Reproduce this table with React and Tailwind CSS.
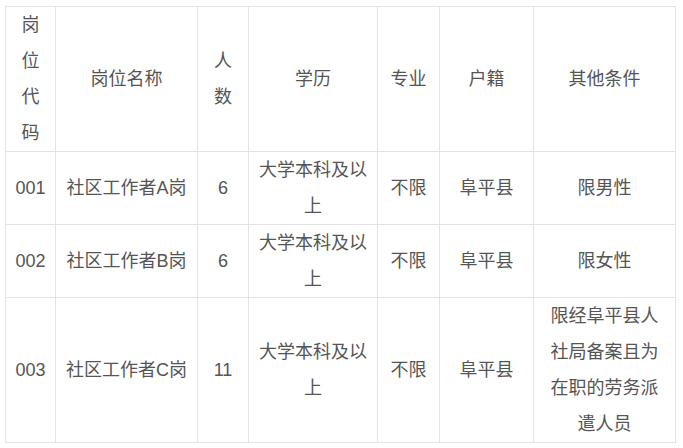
const rows = [
  { code: "001", name: "社区工作者A岗", num: "6", edu: "大学本科及以上", major: "不限", hukou: "阜平县", other: "限男性" },
  { code: "002", name: "社区工作者B岗", num: "6", edu: "大学本科及以上", major: "不限", hukou: "阜平县", other: "限女性" },
  { code: "003", name: "社区工作者C岗", num: "11", edu: "大学本科及以上", major: "不限", hukou: "阜平县", other: "限经阜平县人社局备案且为在职的劳务派遣人员" },
];

const cell = "border border-[#e3e3e3] px-[9px] py-0 text-center align-middle break-all";

const App = () => {
  return (
    <div className="w-[683px] h-[448px] bg-white pt-[6px] pl-[5px]">
      <table
        className="table-fixed border-collapse text-[18px] leading-[36px] text-[#555]"
        style={{ fontFamily: '"Liberation Sans", "Noto Sans CJK SC", sans-serif' }}
      >
        <colgroup>
          <col className="w-[50px]" />
          <col className="w-[142px]" />
          <col className="w-[51px]" />
          <col className="w-[129px]" />
          <col className="w-[62px]" />
          <col className="w-[94px]" />
          <col className="w-[142px]" />
        </colgroup>
        <thead>
          <tr className="h-[145px]">
            <th className={`${cell} font-normal`}>岗位代码</th>
            <th className={`${cell} font-normal`}>岗位名称</th>
            <th className={`${cell} font-normal`}>人数</th>
            <th className={`${cell} font-normal`}>学历</th>
            <th className={`${cell} font-normal`}>专业</th>
            <th className={`${cell} font-normal`}>户籍</th>
            <th className={`${cell} font-normal`}>其他条件</th>
          </tr>
        </thead>
        <tbody>
          {rows.map((r) => (
            <tr key={r.code} className={r.code === "003" ? "h-[145px]" : "h-[73px]"}>
              <td className={cell}>{r.code}</td>
              <td className={cell}>{r.name}</td>
              <td className={cell}>{r.num}</td>
              <td className={cell}>{r.edu}</td>
              <td className={cell}>{r.major}</td>
              <td className={cell}>{r.hukou}</td>
              <td className={cell}>{r.other}</td>
            </tr>
          ))}
        </tbody>
      </table>
    </div>
  );
};

export default App;
